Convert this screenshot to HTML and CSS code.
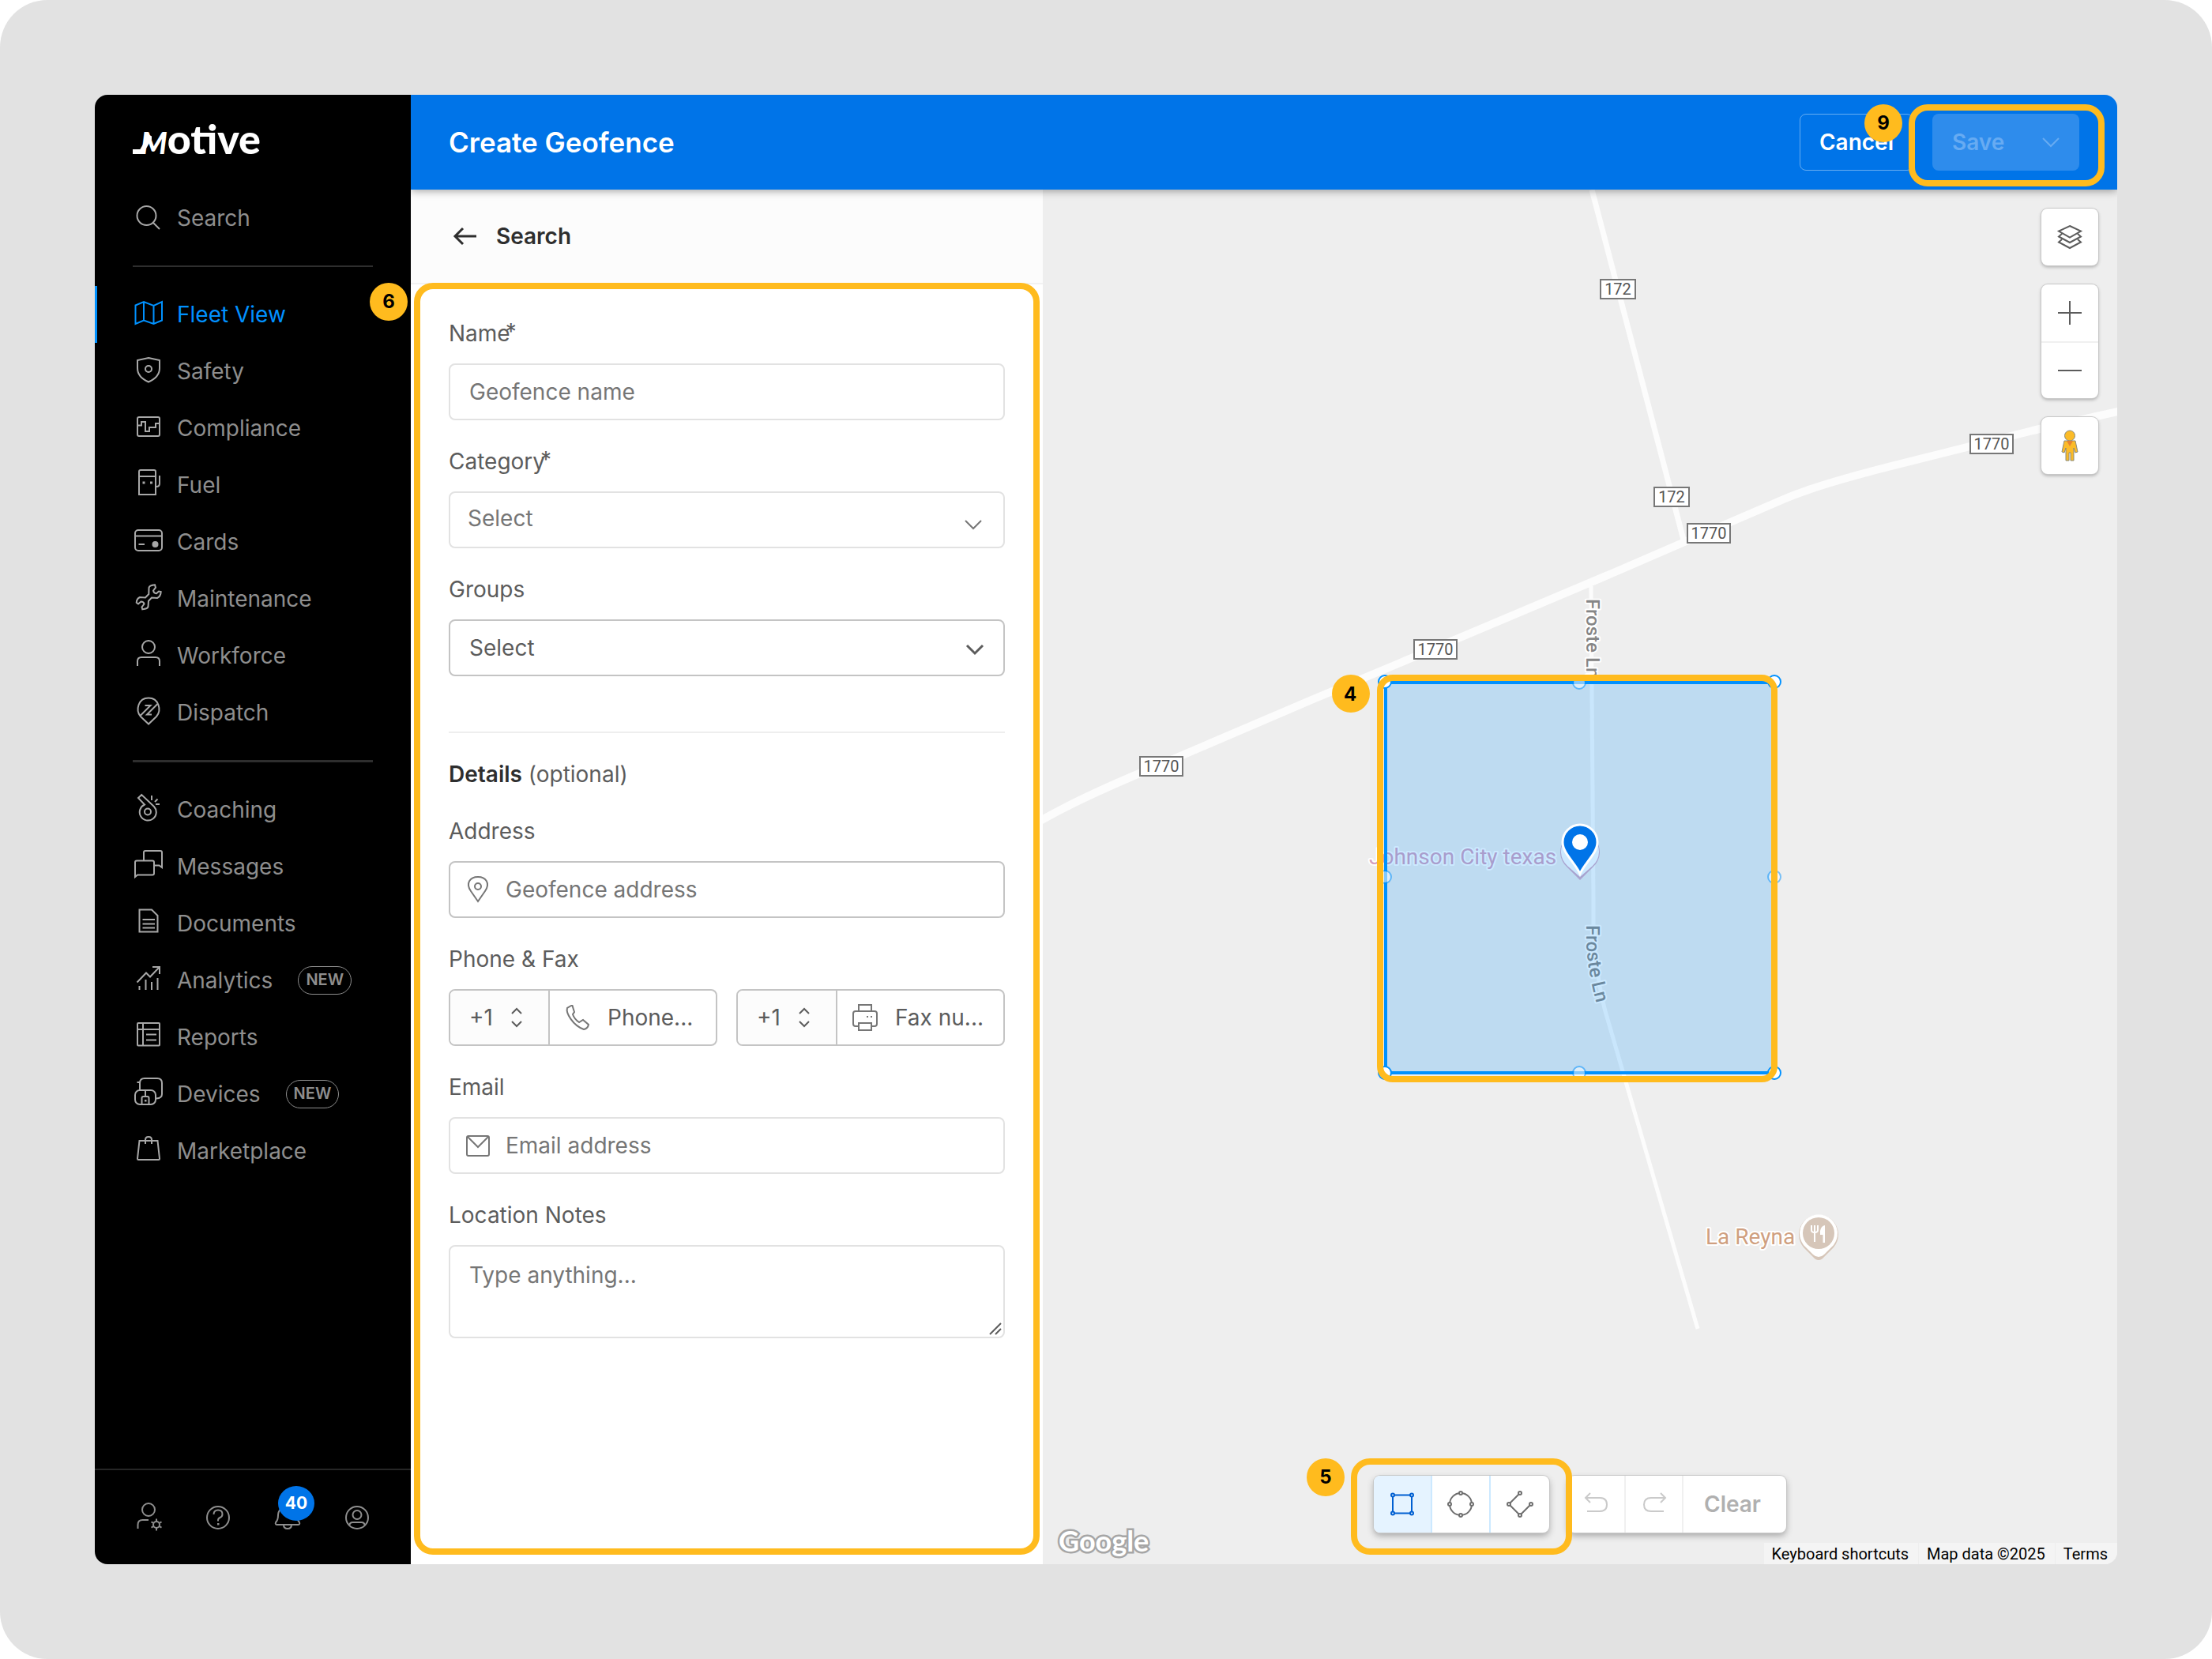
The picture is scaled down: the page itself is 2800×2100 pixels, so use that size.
FILE: index.html
```
<!DOCTYPE html>
<html lang="en">
<head>
    <meta charset="UTF-8">
    <meta name="viewport" content="width=device-width, initial-scale=1.0">
    <title>Create Geofence</title>
    <link rel="stylesheet" href="styles.css">
</head>
<body>
    <div class="frame">
        <div class="app">
            <aside class="sidebar">
                <div class="logo"><svg class="logo-tail" viewBox="0 0 24 28"><path d="M0 25h11L23 5"/></svg><span class="logo-m">M</span>otive</div>

                <a href="#" class="nav-item">
                    <svg class="icon" viewBox="0 0 36 40"><circle cx="15.5" cy="17" r="12"/><path d="M24 26l8 8"/></svg>
                    Search
                </a>
                <hr>
                <nav>
                    <a href="#" class="nav-item active">
                        <svg class="icon" viewBox="0 0 36 40"><path d="M1.5 8.5L12 4l12.500 5L35 4v23.500L24.500 32 12 27.500 1.500 32zM12 4v23.500M24.500 9v23"/></svg>
                        Fleet View
                    </a>
                    <a href="#" class="nav-item">
                        <svg class="icon" viewBox="0 0 36 40"><path d="M18 3l14 3v10c0 9-6 14-14 17.500C10 30 4 25 4 16V6z"/><circle cx="18" cy="17" r="4"/></svg>
                        Safety
                    </a>
                    <a href="#" class="nav-item">
                        <svg class="icon" viewBox="0 0 36 40"><rect x="4" y="6" width="28" height="24" rx="2"/><path d="M4 16.500h5V12h5v12h5v-5h8v-5h5"/></svg>
                        Compliance
                    </a>
                    <a href="#" class="nav-item">
                        <svg class="icon" viewBox="0 0 36 40"><path d="M6 32V3q0-2 2-2h17q2 0 2 2v29zM6 9h21M32 8v10q0 4-4 4"/><path class="solid" d="M10.500 15.500h3v3h-3zM20 15.500h3v3h-3z"/></svg>
                        Fuel
                    </a>
                    <a href="#" class="nav-item">
                        <svg class="icon" viewBox="0 0 36 40"><rect x="1" y="5" width="34" height="26" rx="4"/><path d="M1 12.500h34M5.500 23H13"/><circle class="solid" cx="26.500" cy="23" r="4"/></svg>
                        Cards
                    </a>
                    <a href="#" class="nav-item">
                        <svg class="icon" viewBox="0 0 36 40"><path d="M26 2.300Q19 3 18.500 6l-.2 8-4.300 4.500-7-.5q-4 2-4.300 6.700L5 26.500l3.500-3q3.500 0 4 3l-3 4 .8 2.800Q17 32.500 17.500 30l.5-7.300 4-4.200 7 .5q4.500-2 4.700-8L31 10.500l-3 2.800q-3.500-.3-4-3.600l3-4z"/></svg>
                        Maintenance
                    </a>
                    <a href="#" class="nav-item">
                        <svg class="icon" viewBox="0 0 36 40"><circle cx="18" cy="9" r="8"/><path d="M4 33v-6q0-5 5-5h18q5 0 5 5v6"/></svg>
                        Workforce
                    </a>
                    <a href="#" class="nav-item">
                        <svg class="icon" viewBox="0 0 36 40"><path d="M18 34.500L8 25C1 17 5 1.500 18 1.500S35 17 28 25zM7.500 24l13-13h-7M29.500 9L16 22.500h6"/></svg>
                        Dispatch
                    </a>
                </nav>
                <hr class="thick">
                <nav>
                    <a href="#" class="nav-item">
                        <svg class="icon" viewBox="0 0 36 40"><path d="M9.300 1L5 5l8 8.500A10.500 10.500 0 1 0 25 16zM22 2v6M29.500 6.500L26 10M27 13h5"/><circle cx="17" cy="22.500" r="4"/></svg>
                        Coaching
                    </a>
                    <a href="#" class="nav-item">
                        <svg class="icon" viewBox="0 0 36 40"><path d="M12 12V2q0-2 2-2h19q2 0 2 2v19l-3.500-2.500H25M1 33V14.500q0-2 2-2h20q2 0 2 2v14q0 2-2 2H4z"/></svg>
                        Messages
                    </a>
                    <a href="#" class="nav-item">
                        <svg class="icon" viewBox="0 0 36 40"><path d="M6.500 2.500H22L29.500 10v20.500h-23zM10.500 15H26M10.500 20.500H26M10.500 25.500H26"/></svg>
                        Documents
                    </a>
                    <a href="#" class="nav-item">
                        <svg class="icon" viewBox="0 0 36 40"><path d="M3.500 22.500L15 10.500l5 5L31.500 3.500M23 3h9v9M6.500 27v5M14.500 19v13M22 22v10M29.500 17v15"/></svg>
                        Analytics
                        <span class="tag">NEW</span>
                    </a>
                    <a href="#" class="nav-item">
                        <svg class="icon" viewBox="0 0 36 40"><rect x="4" y="2" width="28" height="28.500" rx="1"/><path d="M4 10h28M11 2v28.500M15 16.500h13M15 23.500h13"/></svg>
                        Reports
                    </a>
                    <a href="#" class="nav-item">
                        <svg class="icon" viewBox="0 0 36 40"><path d="M3.500 5h4M7 15V6q0-6 6-6h16q6 0 6 6v14q0 5-7 5.500"/><rect x="1" y="15" width="26" height="18" rx="6"/><path d="M14 15v8M9.500 33v-8q0-2 2-2h5q2 0 2 2v8"/><path class="solid" d="M13 27h2.500v2.500H13z"/></svg>
                        Devices
                        <span class="tag">NEW</span>
                    </a>
                    <a href="#" class="nav-item">
                        <svg class="icon" viewBox="0 0 36 40"><path d="M6.500 7h23L32 29.500q0 1.500-1.500 1.500h-25Q4 31 4 29.500zM14 11V6q0-4 4-4t4 4v5"/></svg>
                        Marketplace
                    </a>
                </nav>

                <div class="sidebar-footer">
                    <button aria-label="Admin">
                        <svg class="icon" viewBox="0 0 36 40"><circle cx="18" cy="10" r="8"/><path d="M4.500 34v-5q0-6 6-6H18"/><circle cx="28" cy="29" r="4"/><path d="M28 25v-3.500M28 33v3.500M24.500 27l-3-1.700M31.500 31l3 1.700M24.500 31l-3 1.700M31.500 27l3-1.700"/></svg>
                    </button>
                    <button aria-label="Help">
                        <svg class="icon" viewBox="0 0 36 40"><circle cx="18" cy="20" r="14"/><path d="M12.500 16q0-5.500 5.500-5.500t5.500 5.200q0 3-3 4.300-2.500 1.200-2.500 3.500v1"/><path class="solid" d="M17 27h2.500v2.500H17z"/></svg>
                    </button>
                    <button aria-label="Notifications" class="bell">
                        <svg class="icon" viewBox="0 0 36 40"><path d="M3 26q3-3 3-9c0-14 24-14 24 0q0 6 3 9 1 3-2 3H5q-3 0-2-3zM13 29q0 5 5 5t5-5"/></svg>
                        <span class="count">40</span>
                    </button>
                    <button aria-label="Account">
                        <svg class="icon" viewBox="0 0 36 40"><circle cx="18" cy="20" r="14"/><circle cx="18" cy="16.500" r="5.500"/><path d="M8.500 29.500q0-3.500 4-3.500h11q4 0 4 3.500"/></svg>
                    </button>
                </div>
            </aside>

            <div class="main">
                <header class="topbar">
                    <h1>Create Geofence</h1>
                    <button class="cancel">Cancel</button>
                    <div class="save-wrap">
                        <button class="save" disabled>
                            Save
                            <svg class="chevron" viewBox="0 0 22 12"><path d="M1 1l10 10L21 1"/></svg>
                        </button>
                        <div class="highlight"></div>
                        <span class="step">9</span>
                    </div>
                </header>

                <div class="content">
                    <section class="panel">
                        <a href="#" class="back">
                            <svg class="arrow" viewBox="0 0 30 24"><path d="M29 12H2M12 2L2 12l10 10"/></svg>
                            Search
                        </a>
                        <form class="form">
                            <div class="highlight"></div>
                            <span class="step">6</span>

                            <label for="name">Name<span class="req">*</span></label>
                            <input type="text" id="name" placeholder="Geofence name">

                            <label for="category">Category<span class="req">*</span></label>
                            <div class="select light">
                                <select id="category"><option>Select</option></select>
                                <svg class="chevron" viewBox="0 0 22 12"><path d="M1 1l10 10L21 1"/></svg>
                            </div>

                            <label for="groups">Groups</label>
                            <div class="select">
                                <select id="groups"><option>Select</option></select>
                                <svg class="chevron" viewBox="0 0 22 12"><path d="M1 1l10 10L21 1"/></svg>
                            </div>

                            <h2><b>Details</b> (optional)</h2>

                            <label for="address">Address</label>
                            <div class="field dark">
                                <svg class="icon" viewBox="0 0 36 40"><path d="M18 35L9 22C2 12 8 4 18 4s16 8 9 18z"/><circle cx="18" cy="16" r="4"/></svg>
                                <input type="text" id="address" placeholder="Geofence address">
                            </div>

                            <label for="phone">Phone &amp; Fax</label>
                            <div class="phones">
                                <div class="field dark">
                                    <div class="code">
                                        <select aria-label="Phone country code"><option>+1</option></select>
                                        <svg class="updown" viewBox="0 0 16 26"><path d="M2 8l6-6 6 6M2 18l6 6 6-6"/></svg>
                                    </div>
                                    <svg class="icon" viewBox="0 0 36 40"><path d="M10 5L5 8C3 14 12 30 26 35q5-1 6-6l-7-6-5 3q-6-4-8-10l2-3-2.500-8z"/></svg>
                                    <input type="tel" id="phone" placeholder="Phone...">
                                </div>
                                <div class="field dark">
                                    <div class="code">
                                        <select aria-label="Fax country code"><option>+1</option></select>
                                        <svg class="updown" viewBox="0 0 16 26"><path d="M2 8l6-6 6 6M2 18l6 6 6-6"/></svg>
                                    </div>
                                    <svg class="icon" viewBox="0 0 36 40"><path d="M10 12V4h16v8M10 31H6q-3 0-3-3V15q0-3 3-3h24q3 0 3 3v13q0 3-3 3h-4M10 27h16v9H10z"/><path class="solid" d="M20 18h2v2h-2zM25 18h2v2h-2z"/></svg>
                                    <input type="tel" aria-label="Fax number" placeholder="Fax nu...">
                                </div>
                            </div>

                            <label for="email">Email</label>
                            <div class="field">
                                <svg class="icon" viewBox="0 0 36 40"><rect x="4" y="8" width="28" height="25" rx="2"/><path d="M5 9l13 13L31 9"/></svg>
                                <input type="email" id="email" placeholder="Email address">
                            </div>

                            <label for="notes">Location Notes</label>
                            <div class="notes">
                                <textarea id="notes" placeholder="Type anything..."></textarea>
                                <svg class="grip" viewBox="0 0 16 16"><path d="M1 15L15 1M8 15l7-7"/></svg>
                            </div>
                        </form>
                    </section>

                    <section class="map">
                        <svg class="map-canvas" viewBox="0 0 1360 1740" preserveAspectRatio="xMidYMid slice">
                            <!-- roads -->
                            <g class="road">
                                <path stroke-width="7" d="M695 0L728 126 812 447"/>
                                <path stroke-width="10" d="M-10 803Q46 770 144 730L340 646 450 600 720 486 810 447 940 391Q980 374 1070 351L1253 305 1370 279"/>
                                <path stroke-width="5" d="M694 502L697 900V935Q699 990 712 1040L746 1157 829 1442"/>
                            </g>

                            <!-- route shields -->
                            <g class="shield">
                                <rect x="706" y="114" width="44" height="24"/><text x="728" y="133">172</text>
                                <rect x="774" y="377" width="44" height="24"/><text x="796" y="396">172</text>
                                <rect x="816" y="423" width="54" height="24"/><text x="843" y="442">1770</text>
                                <rect x="1174" y="310" width="54" height="24"/><text x="1201" y="329">1770</text>
                                <rect x="470" y="570" width="54" height="24"/><text x="497" y="589">1770</text>
                                <rect x="123" y="718" width="54" height="24"/><text x="150" y="737">1770</text>
                            </g>

                            <path id="froste-a" fill="none" d="M688 518V640"/>
                            <path id="froste-b" fill="none" d="M688 931V955Q690 995 705 1045"/>
                            <text class="street"><textPath href="#froste-a">Froste Ln</textPath></text>
                            <text class="street"><textPath href="#froste-b">Froste Ln</textPath></text>

                            <!-- places -->
                            <text class="place pink" x="413" y="854">Johnson City texas</text>
                            <path fill="#d4a8c4" d="M680 874l-16-16a25 25 0 1 1 32 0z"/>
                            <path fill="#fff" d="M680 870l-16-14a24 24 0 1 1 32 0z"/>
                            <text class="place brown" x="839" y="1335">La Reyna</text>
                            <path fill="#d6c6b9" d="M982 1355q-4 0-7-4l-12-12a25 25 0 1 1 38 0l-12 12q-3 4-7 4z"/>
                            <path fill="#fff" d="M982 1351q-4 0-7-3l-12-12a24 24 0 1 1 38 0l-12 12q-3 3-7 3z"/>
                            <circle fill="#d6c6b9" cx="982" cy="1321" r="20"/>
                            <path fill="none" stroke="#fff" stroke-width="2" d="M973 1311v6q0 3 4 3t4-3v-6M977 1311v21"/>
                            <path fill="#fff" d="M990 1311v22h-2.500v-10H984v-5q1-6 6-7z"/>

                            <!-- geofence -->
                            <rect x="434" y="624" width="491" height="494" fill="#0091ff" fill-opacity=".2" stroke="#0091ff" stroke-width="4"/>
                            <g class="handle">
                                <circle cx="433" cy="623" r="8"/><circle cx="926" cy="623" r="8"/>
                                <circle cx="433" cy="1118" r="8"/><circle cx="926" cy="1118" r="8"/>
                            </g>
                            <g class="handle mid">
                                <circle cx="679" cy="624" r="8"/><circle cx="433" cy="870" r="8"/>
                                <circle cx="926" cy="870" r="8"/><circle cx="679" cy="1118" r="8"/>
                            </g>
                            <path fill="#0074e8" stroke="#fff" stroke-width="3" d="M680 866C674 852 658 840 658 826a22 22 0 1 1 44 0c0 14-16 26-22 40z"/>
                            <circle fill="#fff" cx="680" cy="826" r="10"/>

                            <rect x="427" y="618" width="499" height="508" rx="16" fill="none" stroke="#ffbb1e" stroke-width="8"/>
                            <circle cx="390" cy="638" r="24" fill="#ffbb1e"/>
                            <text class="step-no" x="389" y="647">4</text>
                        </svg>

                        <div class="map-controls">
                            <div class="box">
                                <button aria-label="Layers"><svg class="tool" viewBox="0 0 36 36"><path d="M18 4l14 6.500-14 8-14-8zM8 14l-4 3.500 14 7.500 14-7.500-4-3.500M8 21l-4 3.500L18 32l14-7.500-4-3.500"/></svg></button>
                            </div>
                            <div class="box">
                                <button aria-label="Zoom in"><svg class="tool" viewBox="0 0 36 36"><path d="M3 18h30M18 3v30"/></svg></button>
                                <button aria-label="Zoom out"><svg class="tool" viewBox="0 0 36 36"><path d="M3 18h30"/></svg></button>
                            </div>
                            <div class="box">
                                <button aria-label="Street View">
                                    <svg class="pegman" viewBox="0 0 24 40"><path d="M5 14h14l3 14-3 1-2-6v16h-4V29h-2v10H7V23l-2 6-3-1z"/><circle cx="12" cy="7.500" r="6.500"/><path class="scarf" d="M8 14h8l-4 7z"/></svg>
                                </button>
                            </div>
                        </div>

                        <div class="toolbars">
                            <div class="toolbar">
                                <button class="selected" aria-label="Rectangle"><svg class="tool" viewBox="0 0 36 36"><path d="M8 6.500h20M8 29.500h20M6 8.500v19M30 8.500v19"/><circle cx="6" cy="6.500" r="2"/><circle cx="30" cy="6.500" r="2"/><circle cx="6" cy="29.500" r="2"/><circle cx="30" cy="29.500" r="2"/></svg></button>
                                <button aria-label="Circle"><svg class="tool" viewBox="0 0 36 36"><circle cx="18" cy="18" r="14"/><g class="knob"><circle cx="18" cy="4" r="2"/><circle cx="18" cy="32" r="2"/><circle cx="4" cy="18" r="2"/><circle cx="32" cy="18" r="2"/></g></svg></button>
                                <button aria-label="Polygon"><svg class="tool" viewBox="0 0 36 36"><path d="M16.500 5.500l-11 11M5.500 19.500l11 11M19.500 30.500l11-11"/><circle cx="18" cy="4" r="2"/><circle cx="4" cy="18" r="2"/><circle cx="18" cy="32" r="2"/><circle cx="32" cy="18" r="2"/></svg></button>
                                <div class="highlight"></div>
                                <span class="step">5</span>
                            </div>
                            <div class="toolbar history">
                                <button aria-label="Undo" disabled><svg class="tool" viewBox="0 0 36 36"><path d="M10 4l-6 6 6 6M4 10h18q9 0 9 8.500T22 27H6"/></svg></button>
                                <button aria-label="Redo" disabled><svg class="tool" viewBox="0 0 36 36"><path d="M26 4l6 6-6 6M32 10H14q-9 0-9 8.500T14 27h16"/></svg></button>
                                <button class="clear" disabled>Clear</button>
                            </div>
                        </div>

                        <svg class="google" viewBox="0 0 124 60"><text x="8" y="44">Google</text></svg>
                        <div class="attribution">
                            <button>Keyboard shortcuts</button>
                            <span>Map data ©2025</span>
                            <a href="#">Terms</a>
                        </div>
                    </section>
                </div>
            </div>
        </div>
    </div>
</body>
</html>
```

FILE: styles.css
```
* {
    box-sizing: border-box;
}
body {
    margin: 0;
    background: #fff;
    font-family: Inter, "Liberation Sans", sans-serif;
    font-size: 28px;
    line-height: 40px;
    color: #5c5c5c;
}
button, input, select, textarea {
    font: inherit;
    color: inherit;
    margin: 0;
}
button {
    padding: 0;
    border: none;
    background: none;
    cursor: pointer;
}
a {
    color: inherit;
    text-decoration: none;
}
svg {
    display: block;
    flex: none;
}
.frame {
    display: flex;
    min-height: 100vh;
    padding: 120px;
    background: #e2e2e2;
    border-radius: 60px;
}
.app {
    flex: 1;
    display: flex;
    border-radius: 16px;
    overflow: hidden;
    background: #fff;
}

/* icons */
.icon, .chevron, .arrow, .updown, .tool, .grip {
    fill: none;
    stroke: currentColor;
    stroke-width: 2;
    overflow: visible;
}
.icon {
    width: 36px;
    height: 40px;
}
.icon .solid {
    fill: currentColor;
    stroke: none;
}
.chevron {
    width: 22px;
    height: 12px;
}
.tool {
    width: 36px;
    height: 36px;
}

/* step callouts */
.highlight {
    position: absolute;
    border: 8px solid #ffbb1e;
    border-radius: 24px;
    pointer-events: none;
    z-index: 2;
}
.step {
    position: absolute;
    z-index: 3;
    width: 48px;
    height: 48px;
    border-radius: 50%;
    background: #ffbb1e;
    color: #000;
    font-size: 24px;
    font-weight: 700;
    line-height: 48px;
    text-align: center;
}

/* sidebar */
.sidebar {
    flex: none;
    display: flex;
    flex-direction: column;
    width: 400px;
    background: #000;
    color: #8e8e8e;
}
.logo {
    display: flex;
    align-items: baseline;
    height: 120px;
    padding: 25px 48px 0;
    color: #fff;
    font-family: Lato, sans-serif;
    font-size: 52px;
    font-weight: 900;
    line-height: 60px;
}
.logo-tail {
    width: 24px;
    height: 28px;
    margin-right: -14px;
    fill: none;
    stroke: #fff;
    stroke-width: 6;
}
.logo-m {
    font-size: 38px;
    font-style: italic;
}
.nav-item {
    display: flex;
    align-items: center;
    height: 72px;
    padding-left: 50px;
    gap: 18px;
}
.nav-item .icon {
    color: #a8a8a8;
}
.nav-item.active, .nav-item.active .icon {
    color: #0091ff;
}
.nav-item.active {
    box-shadow: inset 3px 0 #0091ff;
}
.sidebar hr {
    width: 304px;
    height: 2px;
    margin: 24px 48px;
    border: none;
    background: #2e2e2e;
}
.sidebar hr.thick {
    height: 3px;
}
.tag {
    height: 36px;
    margin-left: 14px;
    padding: 0 9px;
    border: 1px solid #8e8e8e;
    border-radius: 18px;
    font-size: 20px;
    font-weight: 600;
    line-height: 32px;
}
.sidebar-footer {
    display: flex;
    align-items: center;
    gap: 52px;
    height: 121px;
    margin-top: auto;
    padding-left: 50px;
    border-top: 2px solid #262626;
}
.bell {
    position: relative;
}
.count {
    position: absolute;
    left: 6px;
    top: -20px;
    width: 46px;
    height: 44px;
    border-radius: 50%;
    background: #0074e8;
    color: #fff;
    font-size: 21px;
    font-weight: 700;
    line-height: 44px;
}

/* top bar */
.main {
    flex: 1;
    min-width: 0;
    display: flex;
    flex-direction: column;
}
.topbar {
    position: relative;
    z-index: 1;
    display: flex;
    align-items: center;
    gap: 24px;
    height: 120px;
    padding: 0 48px;
    background: #0074e8;
    color: #fff;
    box-shadow: 0 2px 10px rgba(0, 0, 0, .35);
}
.topbar h1 {
    flex: 1;
    margin: 0;
    font-size: 35px;
    font-weight: 600;
}
.cancel, .save {
    height: 72px;
    border-radius: 8px;
    font-weight: 600;
}
.cancel {
    padding: 0 24px;
    border: 1px solid #66acf1;
}
.save-wrap {
    position: relative;
}
.save {
    display: flex;
    align-items: center;
    justify-content: space-between;
    width: 186px;
    padding: 0 25px;
    background: #2e8cec;
    color: #67abf2;
}
.save-wrap .highlight {
    inset: -12px -32px -20px -30px;
}
.save-wrap .step {
    left: -86px;
    top: -12px;
}

/* form panel */
.content {
    flex: 1;
    display: flex;
}
.panel {
    flex: none;
    display: flex;
    flex-direction: column;
    width: 800px;
}
.back {
    display: flex;
    align-items: center;
    gap: 24px;
    height: 120px;
    padding: 0 54px;
    background: #fcfcfc;
    border-bottom: 2px solid #f2f2f2;
    color: #2e2e2e;
    font-weight: 600;
}
.arrow {
    width: 30px;
    height: 24px;
    stroke-width: 3;
}
.form {
    position: relative;
    flex: 1;
    padding: 42px 48px;
}
.form > .highlight {
    inset: -2px 4px 12px;
}
.form > .step {
    left: -52px;
    top: -2px;
}
.form label {
    display: block;
    margin-bottom: 18px;
}
.req {
    margin-left: -6px;
    line-height: 0;
    vertical-align: 2px;
}
.form input, .form textarea, .form select {
    display: block;
    width: 100%;
    height: 72px;
    padding: 0 24px;
    border: 2px solid #e2e2e2;
    border-radius: 8px;
    background: #fff;
    outline: none;
}
.form > input, .select, .field {
    margin-bottom: 32px;
}
.form input::placeholder, .form textarea::placeholder {
    color: #767676;
    opacity: 1;
}
.form select {
    appearance: none;
    border-color: #c4c4c4;
}
.form .light select {
    padding: 0 22px 4px;
    border-color: #e2e2e2;
}
.light {
    color: #767676;
}
.select {
    position: relative;
}
.select .chevron {
    position: absolute;
    right: 27px;
    top: 32px;
    stroke-width: 3;
}
.light .chevron {
    right: 29px;
    top: 36px;
    stroke-width: 2;
}
.form h2 {
    margin: 70px 0 32px;
    padding-top: 32px;
    border-top: 2px solid #eee;
    font-size: 28px;
    font-weight: 400;
}
.form h2 b {
    color: #2e2e2e;
    font-weight: 600;
}
.field {
    display: flex;
    align-items: center;
    height: 72px;
    border: 2px solid #e2e2e2;
    border-radius: 8px;
}
.field.dark {
    border-color: #c4c4c4;
}
.field > .icon {
    margin-left: 17px;
    color: #767676;
}
.form .field input {
    flex: 1;
    min-width: 0;
    height: 68px;
    padding: 0 8px 0 17px;
    border: none;
}
.phones {
    display: grid;
    grid-template-columns: 1fr 1fr;
    gap: 24px;
}
.phones input::placeholder {
    color: #5c5c5c;
}
.phones .field input {
    padding-left: 20px;
}
.code {
    position: relative;
    flex: none;
    width: 126px;
}
.form .code select {
    height: 68px;
    border: none;
    border-right: 2px solid #c4c4c4;
    border-radius: 6px 0 0 6px;
    background: #fcfcfc;
}
.updown {
    position: absolute;
    right: 34px;
    top: 21px;
    width: 16px;
    height: 26px;
}
.notes {
    position: relative;
}
.form textarea {
    height: 118px;
    padding: 16px 24px;
    resize: none;
}
.grip {
    position: absolute;
    right: 4px;
    bottom: 4px;
    width: 16px;
    height: 16px;
}

/* map */
.map {
    position: relative;
    flex: 1;
    min-width: 0;
    background: #eee;
    overflow: hidden;
}
.map-canvas {
    position: absolute;
    width: 100%;
    height: 100%;
    font-family: Roboto, sans-serif;
}
.road {
    fill: none;
    stroke: #fcfcfc;
    stroke-linejoin: round;
}
.shield rect {
    fill: #fff;
    stroke: #777;
    stroke-width: 2;
}
.shield text {
    fill: #555;
    font-size: 20px;
    text-anchor: middle;
}
.street, .place {
    paint-order: stroke;
    stroke: #fff;
    stroke-width: 4px;
    stroke-linejoin: round;
}
.street {
    fill: #868686;
    font-size: 24px;
    font-weight: 500;
}
.place {
    font-size: 28px;
}
.pink {
    fill: #d4a0c0;
}
.brown {
    fill: #cf9f80;
}
.handle {
    fill: #fff;
    stroke: #0091ff;
    stroke-width: 2;
}
.handle.mid {
    opacity: .5;
}
.step-no {
    font: 700 24px Inter, sans-serif;
    text-anchor: middle;
}
.map-controls {
    position: absolute;
    top: 24px;
    right: 24px;
    display: flex;
    flex-direction: column;
    gap: 24px;
}
.box, .toolbar {
    border-radius: 8px;
    background: #fff;
    box-shadow: 0 0 0 1px #c8c8c8, 0 2px 4px rgba(0, 0, 0, .3);
}
.box button, .toolbar button {
    display: flex;
    align-items: center;
    justify-content: center;
    width: 72px;
    height: 72px;
}
.box button + button {
    border-top: 2px solid #f0f0f0;
}
.pegman {
    width: 24px;
    height: 40px;
    fill: #fbbb28;
    stroke: #8a8a7a;
    stroke-width: 1;
}
.pegman .scarf {
    fill: #e58232;
    stroke: none;
}
.toolbars {
    position: absolute;
    left: 0;
    right: 0;
    bottom: 40px;
    display: flex;
    justify-content: center;
    gap: 24px;
}
.toolbar {
    position: relative;
    display: flex;
    box-shadow: 0 0 0 1px #c8c8c8, 0 4px 8px rgba(0, 0, 0, .3);
}
.toolbar button {
    width: 74px;
    border-right: 2px solid #cce9ff;
    color: #6e6e6e;
}
.toolbar button:last-of-type {
    border-right: none;
}
.toolbar .selected {
    border-radius: 8px 0 0 8px;
    background: #e5f3ff;
    color: #005fd1;
}
.knob {
    fill: #fff;
}
.toolbar .highlight {
    inset: -22px -29px -28px;
}
.toolbar .step {
    left: -85px;
    top: -22px;
}
.toolbar.history button {
    width: 73px;
    border-color: #f0f0f0;
    color: #cacaca;
}
.toolbar.history .clear {
    width: 130px;
    padding-right: 6px;
    color: #b0b0b0;
    font-weight: 600;
}
.google {
    position: absolute;
    left: 12px;
    bottom: 0;
    width: 124px;
    height: 60px;
    overflow: visible;
}
.google text {
    font: 700 36px Lato, sans-serif;
    fill: #fff;
    stroke: #a6a6a6;
    stroke-width: 5px;
    paint-order: stroke;
}
.attribution {
    position: absolute;
    right: 0;
    bottom: 0;
    display: flex;
    gap: 1px;
    color: #000;
    font-family: Roboto, sans-serif;
    font-size: 20px;
    line-height: 26px;
}
.attribution > * {
    padding: 1px 12px 0 10px;
    background: #f4f4f4;
}
```
